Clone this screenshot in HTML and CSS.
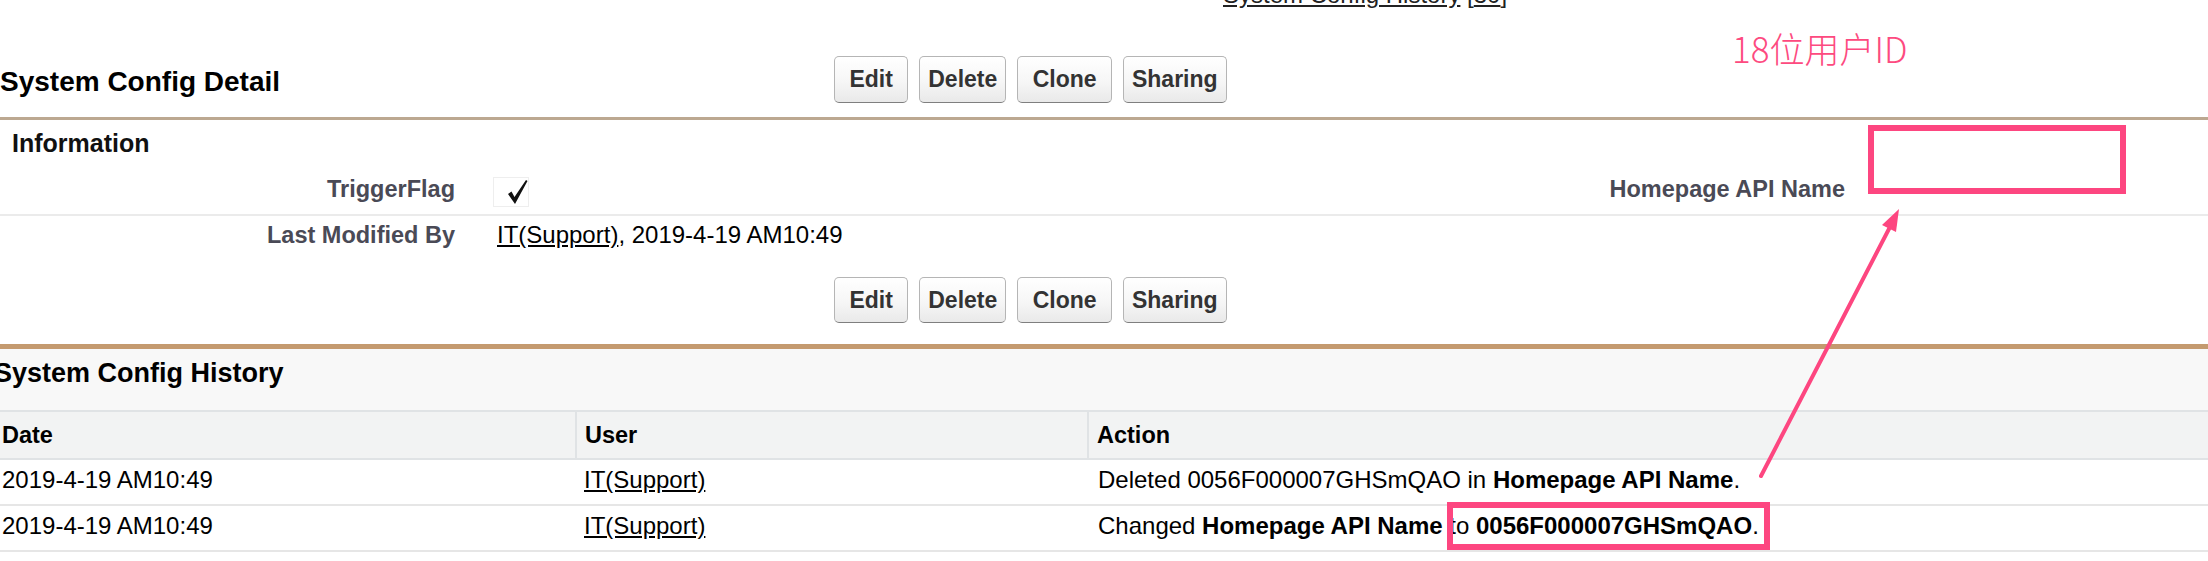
FILE: index.html
```html
<!DOCTYPE html>
<html lang="en">
<head>
<meta charset="utf-8">
<title>System Config Detail</title>
<link rel="stylesheet" href="styles.css">
</head>
<body>
<div class="page">
  <div class="crumb"><div class="crumb-inner"><a href="#">System Config History</a> [<a href="#">30</a>]</div></div>

  <div class="detail-head">
    <h1 class="title">System Config Detail</h1>
    <div class="buttons">
      <button class="btn">&nbsp;Edit&nbsp;</button>
      <button class="btn">Delete</button>
      <button class="btn">&nbsp;Clone&nbsp;</button>
      <button class="btn">Sharing</button>
    </div>
  </div>
  <div class="rule-detail"></div>

  <div class="section-head">
    <svg class="twisty" width="13" height="14" viewBox="0 0 13 14"><path d="M0 3 L10 3 L5 11 Z" fill="#8a8a8a"/></svg>
    <span>Information</span>
  </div>

  <div class="fields">
    <div class="field-row">
      <div class="label">TriggerFlag</div>
      <div class="data data-check">
        <svg class="checkbox" width="36" height="30" viewBox="0 0 36 30">
          <rect x="0.5" y="0.5" width="35" height="29" fill="#fff" stroke="#dcdcdc" stroke-dasharray="1 1"/>
          <path d="M15 17 L18.5 14.5 L21.5 20 L33 3 L34.5 4 L22 27 Z" fill="#111"/>
        </svg>
      </div>
      <div class="label">Homepage API Name</div>
      <div class="data"></div>
    </div>
    <div class="field-row">
      <div class="label">Last Modified By</div>
      <div class="data"><a href="#" class="link">IT(Support)</a>, 2019-4-19 AM10:49</div>
      <div class="label"></div>
      <div class="data"></div>
    </div>
  </div>

  <div class="buttons buttons-bottom">
    <button class="btn">&nbsp;Edit&nbsp;</button>
    <button class="btn">Delete</button>
    <button class="btn">&nbsp;Clone&nbsp;</button>
    <button class="btn">Sharing</button>
  </div>

  <div class="rule-list"></div>
  <div class="rl-head">System Config History</div>
  <div class="rl-table">
    <div class="rl-row rl-header">
      <div class="th">Date</div>
      <div class="th">User</div>
      <div class="th">Action</div>
    </div>
    <div class="rl-row">
      <div class="td">2019-4-19 AM10:49</div>
      <div class="td"><a href="#" class="link">IT(Support)</a></div>
      <div class="td td-action">Deleted 0056F000007GHSmQAO in <b>Homepage API Name</b>.</div>
    </div>
    <div class="rl-row">
      <div class="td">2019-4-19 AM10:49</div>
      <div class="td"><a href="#" class="link">IT(Support)</a></div>
      <div class="td td-action">Changed <b>Homepage API Name</b> to <b>0056F000007GHSmQAO</b>.</div>
    </div>
  </div>
</div>

<div class="note">18位用户ID</div>
<div class="mark mark-top"></div>
<div class="mark mark-id"></div>
<svg class="arrow" width="2208" height="561" viewBox="0 0 2208 561">
  <line x1="1761" y1="476" x2="1891" y2="225" stroke="#fd4680" stroke-width="4" stroke-linecap="round"/>
  <polygon points="1899,209 1896,232 1882,225" fill="#fd4680"/>
</svg>
</body>
</html>
```

FILE: styles.css
```css
html, body {
  margin: 0;
  padding: 0;
}

body {
  position: relative;
  width: 2208px;
  height: 561px;
  overflow: hidden;
  background: #ffffff;
  font-family: "Liberation Sans", Arial, sans-serif;
  color: #000;
}

.page {
  margin-left: -10px;
  width: 2218px;
}

/* top cut-off link */
.crumb {
  height: 10px;
  overflow: hidden;
  padding-left: 1233px;
  font-size: 24px;
  line-height: 24px;
  color: #222;
}
.crumb-inner {
  margin-top: -17px;
  white-space: nowrap;
}
.crumb a {
  color: #222;
  text-decoration: underline;
}

/* detail header */
.detail-head {
  display: grid;
  grid-template-columns: 844px auto;
  align-items: center;
  padding-top: 46px;
  padding-bottom: 14px;
}
.title {
  margin: 0;
  padding: 4px 0 0 10px;
  font-size: 28px;
  line-height: 32px;
  font-weight: bold;
  color: #000;
  white-space: nowrap;
}

.buttons {
  display: flex;
  gap: 11px;
}
.btn {
  height: 47px;
  margin: 0;
  padding: 0 8px;
  font-family: "Liberation Sans", Arial, sans-serif;
  font-size: 23px;
  font-weight: bold;
  color: #333;
  white-space: pre;
  border: 1px solid #b5b5b5;
  border-bottom-color: #7f7f7f;
  border-radius: 5px;
  background: linear-gradient(#ffffff 0%, #f6f6f6 55%, #e9e9e9 100%);
}

.rule-detail {
  height: 3px;
  background: #bca891;
}

/* Information section */
.section-head {
  display: flex;
  align-items: center;
  padding: 8px 0 12px 0;
  font-size: 25px;
  line-height: 30px;
  font-weight: bold;
  color: #111;
}
.twisty {
  margin-right: 9px;
  flex: none;
}

.field-row {
  display: grid;
  grid-template-columns: 475px 915px 475px 1fr;
  height: 44px;
  align-items: center;
}
.field-row + .field-row {
  border-top: 2px solid #ebebeb;
}
.label {
  padding: 0 10px 6px 0;
  text-align: right;
  font-size: 23.5px;
  line-height: 28px;
  font-weight: bold;
  color: #4a4a56;
  white-space: nowrap;
}
.data {
  padding: 0 0 6px 32px;
  font-size: 24px;
  line-height: 28px;
  color: #000;
  white-space: nowrap;
}
.data-check {
  display: flex;
  align-items: center;
  padding-bottom: 0;
}
.checkbox {
  margin-left: -4px;
}
.link {
  color: #000;
  text-decoration: underline;
}

.buttons-bottom {
  padding: 17px 0 21px 844px;
}
.buttons-bottom .btn {
  height: 46px;
}

/* related list */
.rule-list {
  height: 5px;
  background: #c49a6f;
}
.rl-head {
  background: #f8f8f8;
  padding: 8px 0 21px 4px;
  font-size: 27px;
  line-height: 32px;
  font-weight: bold;
  color: #000;
}
.rl-table {
  border-top: 2px solid #e0e3e5;
}
.rl-row {
  display: grid;
  grid-template-columns: 585px 512px 1fr;
  height: 44px;
  border-bottom: 2px solid #e6e6e6;
}
.rl-header {
  height: 46px;
  background: #f2f3f3;
  border-bottom-color: #e0e3e5;
}
.th {
  padding-left: 12px;
  font-size: 23.5px;
  line-height: 46px;
  font-weight: bold;
  color: #000;
  white-space: nowrap;
}
.th + .th {
  border-left: 2px solid #e0e3e5;
  padding-left: 8px;
}
.td {
  padding: 0 0 4px 12px;
  font-size: 24px;
  line-height: 40px;
  color: #000;
  white-space: nowrap;
}
.td + .td {
  padding-left: 9px;
}
.td + .td-action {
  padding-left: 11px;
}
.td b {
  font-weight: bold;
}

/* annotations */
.note {
  position: absolute;
  left: 1732px;
  top: 30px;
  font-family: "Noto Sans CJK SC", "Liberation Sans", sans-serif;
  font-size: 35px;
  line-height: 35px;
  font-weight: 300;
  color: #fd4a80;
  white-space: nowrap;
}
.mark {
  position: absolute;
  box-sizing: border-box;
  border: 6px solid #fd4680;
}
.mark-top {
  left: 1868px;
  top: 125px;
  width: 258px;
  height: 69px;
}
.mark-id {
  left: 1447px;
  top: 502px;
  width: 323px;
  height: 48px;
}
.arrow {
  position: absolute;
  left: 0;
  top: 0;
  pointer-events: none;
}
```
